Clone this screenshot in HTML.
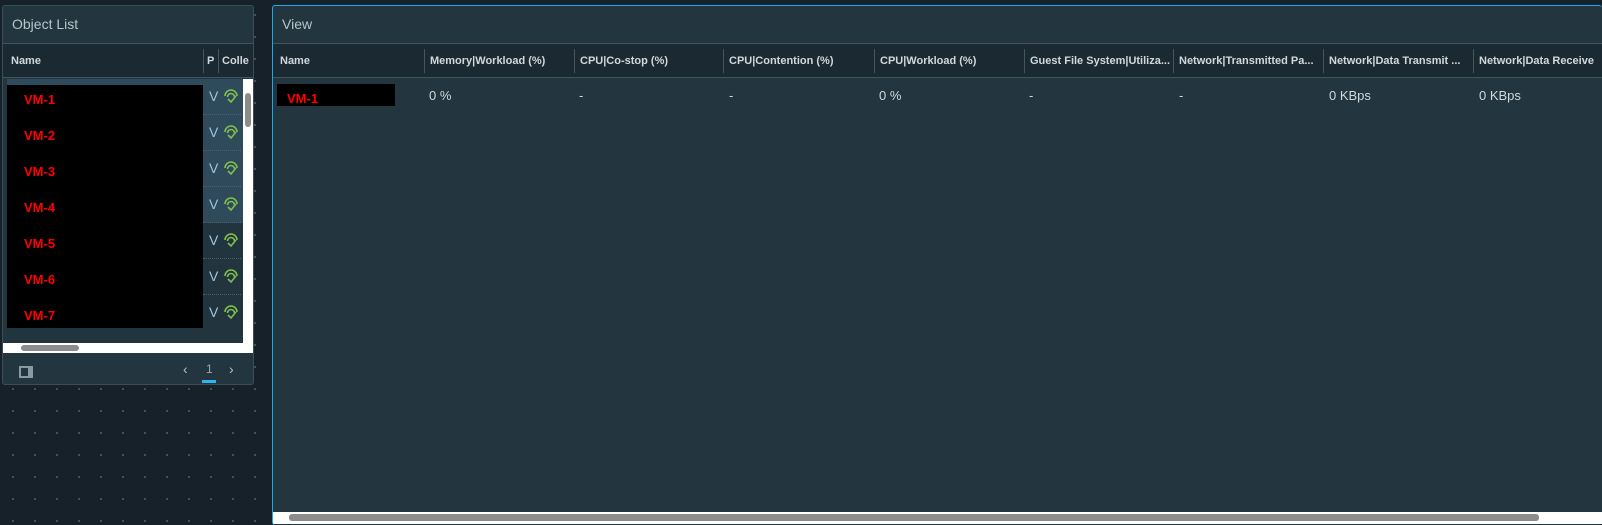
<!DOCTYPE html>
<html><head><style>
*{margin:0;padding:0;box-sizing:border-box}
body{width:1602px;height:525px;overflow:hidden;background:#17212a;font-family:"Liberation Sans",sans-serif;position:relative;
background-image:radial-gradient(circle,#4a5a66 0.8px,transparent 1.2px);background-size:22px 22px;background-position:2px 4px}
.abs{position:absolute}
.panel{position:absolute;background:#23363f;border:1px solid #3b4d57;border-radius:3px}
.title{position:absolute;left:0;right:0;top:0;height:38px;border-bottom:1px solid #3f5560;color:#b8c4ca;font-size:14px;padding:10px 0 0 9px}
.hdr{position:absolute;left:0;right:0;top:38px;height:34px;background:#1b2932;border-bottom:1px solid #3f5560;color:#d0d8dc;font-size:11px;font-weight:bold}
.hdr span{position:absolute;top:11px;white-space:nowrap;overflow:hidden}
.sep{position:absolute;top:5px;width:1px;height:24px;background:#44565f}
.vm{color:#f00;font-weight:bold;font-size:13px;position:absolute}
.cell{position:absolute;color:#d0d8dc;font-size:13px;top:88px}
</style></head><body>
<div class="panel" style="left:2px;top:5px;width:252px;height:380px">
 <div class="title">Object List</div>
 <div class="hdr"><span style="left:8px">Name</span><div class="sep" style="left:200px"></div><span style="left:204px">P</span><div class="sep" style="left:215px"></div><span style="left:219px;width:32px">Colle</span></div>
 <div class="abs" style="left:4px;top:73px;width:236px;height:144px;background:#2e4a5b"></div>
 <div class="abs" style="left:4px;top:217px;width:236px;height:120px;background:#22343d"></div>
 <div class="abs" style="left:4px;top:79px;width:196px;height:243px;background:#000"></div>
 <div class="abs" style="left:0;top:337px;width:250px;height:10px;background:#fff"></div>
 <div class="abs" style="left:18px;top:339px;width:58px;height:6px;border-radius:3px;background:#8c8c8c"></div>
 <div class="abs" style="left:240px;top:73px;width:10px;height:264px;background:#fff"></div>
 <div class="abs" style="left:242px;top:87px;width:6px;height:34px;border-radius:3px;background:#8c8c8c"></div>
 <div class="abs" style="left:16px;top:360px;width:14px;height:12px;border:2px solid #8a9aa3;border-right-width:5px"></div>
 <div class="abs" style="left:180px;top:355px;color:#9ec6e0;font-size:14px">&#8249;</div>
 <div class="abs" style="left:203px;top:356px;color:#9aa8b0;font-size:12px">1</div>
 <div class="abs" style="left:199px;top:374px;width:14px;height:3px;background:#30b4f0"></div>
 <div class="abs" style="left:226px;top:355px;color:#9ec6e0;font-size:14px">&#8250;</div>
</div>
<div id="rows"></div>
<div class="panel" style="left:272px;top:5px;width:1330px;height:520px;border-color:#1fa8e8;border-right:none;border-bottom:none">
 <div class="title">View</div>
 <div class="hdr">
  <span style="left:7px">Name</span>
  <div class="sep" style="left:151px"></div><span style="left:157px;width:140px">Memory|Workload (%)</span>
  <div class="sep" style="left:301px"></div><span style="left:307px;width:140px">CPU|Co-stop (%)</span>
  <div class="sep" style="left:450px"></div><span style="left:456px;width:140px">CPU|Contention (%)</span>
  <div class="sep" style="left:601px"></div><span style="left:607px;width:140px">CPU|Workload (%)</span>
  <div class="sep" style="left:751px"></div><span style="left:757px;width:140px">Guest File System|Utiliza...</span>
  <div class="sep" style="left:900px"></div><span style="left:906px;width:140px">Network|Transmitted Pa...</span>
  <div class="sep" style="left:1050px"></div><span style="left:1056px;width:140px">Network|Data Transmit ...</span>
  <div class="sep" style="left:1200px"></div><span style="left:1206px;width:124px">Network|Data Receive</span>
 </div>
 <div class="abs" style="left:4px;top:78px;width:118px;height:22px;background:#000"></div>
 <div class="vm" style="left:14px;top:85px">VM-1</div>
 <div class="abs" style="left:0;top:506px;width:1330px;height:12px;background:#fff"></div>
 <div class="abs" style="left:16px;top:508px;width:1250px;height:7px;border-radius:3px;background:#8c8c8c"></div>
</div>
<div class="cell" style="left:429px">0 %</div>
<div class="cell" style="left:579px">-</div>
<div class="cell" style="left:729px">-</div>
<div class="cell" style="left:879px">0 %</div>
<div class="cell" style="left:1029px">-</div>
<div class="cell" style="left:1179px">-</div>
<div class="cell" style="left:1329px">0 KBps</div>
<div class="cell" style="left:1479px">0 KBps</div>
<script>
var h='';for(var i=0;i<7;i++){var y=79+i*36;
h+='<div class="vm" style="left:24px;top:'+(y+13)+'px">VM-'+(i+1)+'</div>';
h+='<div class="abs" style="left:209px;top:'+(y+9)+'px;color:#9ec6e0;font-size:14px">V</div>';
h+='<svg class="abs" style="left:223px;top:'+(y+8)+'px" width="16" height="18" viewBox="0 0 16 18"><path d="M2 9a6 6 0 0 1 12 0M4.5 10a3.5 3.5 0 0 1 7 0M5 12l3 3 5-6" fill="none" stroke="#7fbf4a" stroke-width="1.6"/></svg>';
if(i<6)h+='<div class="abs" style="left:203px;top:'+(y+35)+'px;width:38px;border-top:1px dotted #4a6270"></div>';}
document.getElementById('rows').innerHTML=h;
</script>
</body></html>
